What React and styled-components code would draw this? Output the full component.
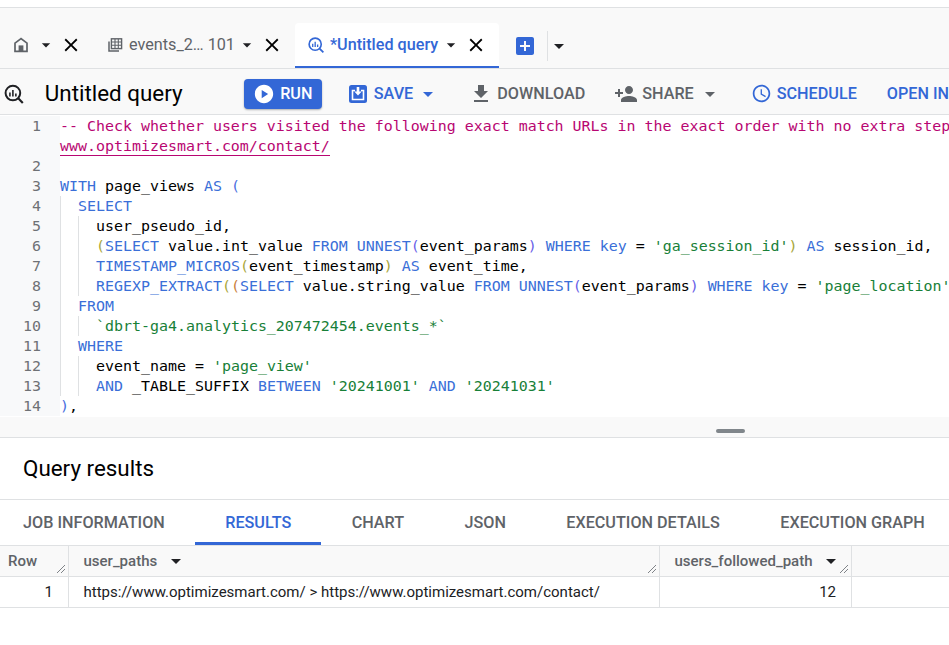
import React from 'react'
import styled, { createGlobalStyle } from 'styled-components'
import {
  MdClose,
  MdArrowDropDown,
  MdPlayCircle,
  MdFileDownload,
  MdPersonAdd,
  MdOutlineSchedule,
  MdAddBox,
} from 'react-icons/md'

const BLUE = '#3367d6'
const GREY = '#5f6368'
const LINE = '#dfe1e3'

const Global = createGlobalStyle`
  html, body { margin: 0; padding: 0; background: #fff; }
  body { font-family: Roboto, "Liberation Sans", sans-serif; overflow: hidden; }
`

const Page = styled.div`
  width: 949px;
  height: 645px;
  overflow: hidden;
  display: flex;
  flex-direction: column;
  background: #fff;
`

const TopStrip = styled.div`
  height: 7px;
  flex: none;
  border-bottom: 1px solid ${LINE};
`

const TabBar = styled.div`
  height: 61px;
  flex: none;
  box-sizing: border-box;
  display: flex;
  align-items: flex-end;
  background: #f9f9f9;
  border-bottom: 1px solid ${LINE};
`

const Tab = styled.div`
  height: 45px;
  box-sizing: border-box;
  padding: 0 12px;
  display: flex;
  align-items: center;
  background: ${(p) => (p.$active ? '#fff' : 'transparent')};
  border-bottom: 2px solid ${(p) => (p.$active ? BLUE : 'transparent')};
  border-radius: 4px 4px 0 0;
  color: ${(p) => (p.$active ? BLUE : GREY)};
`

const TabLabel = styled.span`
  font-size: 16.2px;
  font-weight: ${(p) => (p.$active ? 500 : 400)};
  margin: 0 ${(p) => (p.$active ? 3 : 2)}px 0 5px;
  white-space: nowrap;
`

const TabCaret = styled(MdArrowDropDown)`
  flex: none;
  color: #202124;
  margin-left: ${(p) => (p.$gap ? '6px' : '0')};
`

const TabClose = styled(MdClose)`
  flex: none;
  color: #000;
  margin-left: 4px;
`

const NewTab = styled.div`
  height: 45px;
  margin-left: 14px;
  display: flex;
  align-items: center;
  color: ${BLUE};
`

const NewDivider = styled.div`
  width: 1px;
  height: 30px;
  background: ${LINE};
  margin-left: 10px;
`

const NewCaret = styled(MdArrowDropDown)`
  color: #202124;
  margin-left: -1px;
`

const Toolbar = styled.div`
  height: 46px;
  flex: none;
  box-sizing: border-box;
  padding: 4px 0 0 3px;
  display: flex;
  align-items: center;
  white-space: nowrap;
  background: #f9f9f9;
  border-bottom: 1px solid ${LINE};
`

const Title = styled.div`
  width: 199px;
  flex: none;
  margin: 0 0 2px 20px;
  font-size: 22.4px;
  color: #000;
`

const RunButton = styled.div`
  width: 78px;
  height: 30px;
  flex: none;
  box-sizing: border-box;
  margin-top: 1px;
  padding-bottom: 1px;
  display: flex;
  align-items: center;
  justify-content: center;
  gap: 5px;
  border-radius: 4px;
  background: ${BLUE};
  color: #fff;
  font-size: 16.2px;
  font-weight: 500;
  box-shadow: 0 1px 2px rgba(60, 64, 67, 0.4);
`

const ToolButton = styled.div`
  flex: none;
  display: flex;
  align-items: center;
  gap: ${(p) => p.$gap || 4}px;
  margin-left: ${(p) => p.$left || 29}px;
  color: ${(p) => (p.$muted ? GREY : BLUE)};
  font-size: 16.2px;
  font-weight: 500;
`

const ToolCaret = styled(MdArrowDropDown)`
  margin-left: ${(p) => p.$pull || 0}px;
`

const Editor = styled.div`
  height: 302px;
  flex: none;
  overflow: hidden;
  padding-top: 1px;
  box-sizing: border-box;
  background: #fff;
  font-family: "DejaVu Sans Mono", "Liberation Mono", monospace;
  font-size: 14.95px;
  line-height: 20px;
`

const CodeRow = styled.div`
  display: flex;
  height: 20px;
  white-space: pre;
`

const LineNo = styled.div`
  width: 60px;
  flex: none;
  box-sizing: border-box;
  padding-right: 19px;
  text-align: right;
  color: #6e7175;
  background: #f8f9fa;
`

const Indent = styled.span`
  display: inline-block;
  width: 18px;
  height: 20px;
  box-sizing: border-box;
  vertical-align: top;
  border-left: 1px solid ${LINE};
`

const COLORS = {
  c: '#b80672',
  k: '#3a6fd8',
  s: '#188038',
  t: '#000',
  y: '#a9a63a',
  o: '#c9803c',
  p: '#6a5fe8',
  b: '#4a6fe0',
}

const Tok = styled.span`
  color: ${(p) => COLORS[p.$kind]};
  ${(p) => p.$link && `border-bottom: 1px solid ${COLORS.c};`}
`

const Splitter = styled.div`
  height: 21px;
  flex: none;
  box-sizing: border-box;
  padding-left: 716px;
  padding-top: 12px;
  background: #f9f9f9;
  border-bottom: 1px solid ${LINE};
`

const Grip = styled.div`
  width: 29px;
  height: 4px;
  border-radius: 2px;
  background: #80868b;
`

const ResultsTitle = styled.div`
  height: 62px;
  flex: none;
  box-sizing: border-box;
  padding: 0 23px 2px;
  display: flex;
  align-items: center;
  font-size: 22.4px;
  color: #000;
  border-bottom: 1px solid ${LINE};
`

const ResultTabs = styled.div`
  height: 46px;
  flex: none;
  box-sizing: border-box;
  display: flex;
  margin-left: -7.2px;
  margin-right: -7px;
  padding-right: 7px;
  white-space: nowrap;
  border-bottom: 1px solid ${LINE};
`

const ResultTab = styled.div`
  height: 45px;
  box-sizing: border-box;
  padding: 3px 30.2px 0;
  display: flex;
  align-items: center;
  font-size: 16.2px;
  font-weight: 500;
  color: ${(p) => (p.$active ? BLUE : GREY)};
  border-bottom: 3px solid ${(p) => (p.$active ? BLUE : 'transparent')};
`

const Grid = styled.div`
  display: grid;
  grid-template-columns: 69px 591px 192px 1fr;
  grid-auto-rows: 31px;
`

const HeadCell = styled.div`
  position: relative;
  box-sizing: border-box;
  display: flex;
  align-items: center;
  gap: 14px;
  padding-left: ${(p) => (p.$row ? 8 : 14.5)}px;
  background: #f9f9f9;
  font-size: 15px;
  font-weight: 500;
  color: ${GREY};
  border-bottom: 1px solid ${LINE};
  border-right: ${(p) => (p.$last ? 'none' : `1px solid ${LINE}`)};
`

const HeadCaret = styled.span`
  width: 0;
  height: 0;
  border-left: 5px solid transparent;
  border-right: 5px solid transparent;
  border-top: 5px solid #202124;
`

const ResizeHandle = styled.svg`
  position: absolute;
  right: 2px;
  bottom: 2px;
  width: 10px;
  height: 10px;
`

const Cell = styled.div`
  box-sizing: border-box;
  display: flex;
  align-items: center;
  justify-content: ${(p) => (p.$num ? 'flex-end' : 'flex-start')};
  padding: ${(p) => (p.$num ? '0 15px 0 0' : '0 0 0 14.5px')};
  font-size: 15px;
  color: #202124;
  white-space: nowrap;
  border-bottom: 1px solid ${LINE};
  border-right: ${(p) => (p.$last ? 'none' : `1px solid ${LINE}`)};
`

const HomeIcon = () => (
  <svg width="18" height="18" viewBox="0 0 18 18">
    <path d="M9 2.6 3 7.2V15.4h12V7.2L9 2.6Z" fill="none" stroke={GREY} strokeWidth="1.7" />
    <rect x="6.6" y="9.4" width="4.8" height="6" fill={GREY} />
  </svg>
)

const TableIcon = () => (
  <svg width="18" height="18" viewBox="0 0 18 18" fill="none" stroke={GREY}>
    <rect x="5.4" y="2.8" width="10.2" height="9.8" strokeWidth="1.4" />
    <path d="M5.4 6h10.2M5.4 9.2h10.2M9 3v9.6M12.3 3v9.6" strokeWidth="1.1" />
    <path d="M3 5.5V15h10" strokeWidth="1.5" />
  </svg>
)

const QueryIcon = ({ size, color }) => (
  <svg width={size} height={size} viewBox="0 0 22 22" fill="none" stroke={color}>
    <circle cx="10" cy="10" r="7.4" strokeWidth="2" />
    <path d="M15.4 15.4 20 20" strokeWidth="2.2" />
    <path d="M7 9.5v4M10 7v6.5M13 10.5v3" strokeWidth="1.6" />
  </svg>
)

const SaveIcon = () => (
  <svg width="22" height="22" viewBox="0 0 22 22">
    <rect x="2" y="2" width="18" height="18" rx="2.5" fill={BLUE} />
    <path d="M8 7.5H5.5v9h11v-9H14" fill="none" stroke="#fff" strokeWidth="1.6" />
    <path d="M9.7 4h2.6v4.6h2.4L11 12.6 7.3 8.6h2.4Z" fill="#fff" />
  </svg>
)

const Handle = () => (
  <ResizeHandle viewBox="0 0 10 10">
    <path d="M1 9 9 1M5 9l4-4" stroke="#70757a" strokeWidth="0.9" fill="none" />
  </ResizeHandle>
)

// token lists for the editor, [kind, text]
const LINES = [
  { n: 1, t: [['c', '-- Check whether users visited the following exact match URLs in the exact order with no extra step']] },
  { t: [['c', 'www.optimizesmart.com/contact/', true]] },
  { n: 2, t: [] },
  { n: 3, t: [['k', 'WITH'], ['t', ' page_views '], ['k', 'AS'], ['t', ' '], ['b', '(']] },
  { n: 4, i: 1, t: [['k', 'SELECT']] },
  { n: 5, i: 2, t: [['t', 'user_pseudo_id,']] },
  {
    n: 6,
    i: 2,
    t: [
      ['y', '('], ['k', 'SELECT'], ['t', ' value.int_value '], ['k', 'FROM'], ['t', ' '], ['k', 'UNNEST'], ['p', '('],
      ['t', 'event_params'], ['p', ')'], ['t', ' '], ['k', 'WHERE'], ['t', ' '], ['k', 'key'], ['t', ' = '], ['s', "'ga_session_id'"],
      ['y', ')'], ['t', ' '], ['k', 'AS'], ['t', ' session_id,'],
    ],
  },
  { n: 7, i: 2, t: [['k', 'TIMESTAMP_MICROS'], ['y', '('], ['t', 'event_timestamp'], ['y', ')'], ['t', ' '], ['k', 'AS'], ['t', ' event_time,']] },
  {
    n: 8,
    i: 2,
    t: [
      ['k', 'REGEXP_EXTRACT'], ['y', '('], ['o', '('], ['k', 'SELECT'], ['t', ' value.string_value '], ['k', 'FROM'], ['t', ' '],
      ['k', 'UNNEST'], ['p', '('], ['t', 'event_params'], ['p', ')'], ['t', ' '], ['k', 'WHERE'], ['t', ' '], ['k', 'key'], ['t', ' = '], ['s', "'page_location'"],
    ],
  },
  { n: 9, i: 1, t: [['k', 'FROM']] },
  { n: 10, i: 2, t: [['s', '`dbrt-ga4.analytics_207472454.events_*`']] },
  { n: 11, i: 1, t: [['k', 'WHERE']] },
  { n: 12, i: 2, t: [['t', 'event_name = '], ['s', "'page_view'"]] },
  {
    n: 13,
    i: 2,
    t: [['k', 'AND'], ['t', ' _TABLE_SUFFIX '], ['k', 'BETWEEN'], ['t', ' '], ['s', "'20241001'"], ['t', ' '], ['k', 'AND'], ['t', ' '], ['s', "'20241031'"]],
  },
  { n: 14, t: [['b', ')'], ['t', ',']] },
]

const RESULT_TABS = ['JOB INFORMATION', 'RESULTS', 'CHART', 'JSON', 'EXECUTION DETAILS', 'EXECUTION GRAPH']

export default function App() {
  return (
    <Page>
      <Global />
      <TopStrip />
      <TabBar>
        <Tab>
          <HomeIcon />
          <TabCaret size={20} $gap />
          <TabClose size={22} />
        </Tab>
        <Tab>
          <TableIcon />
          <TabLabel>events_2… 101</TabLabel>
          <TabCaret size={20} />
          <TabClose size={22} />
        </Tab>
        <Tab $active>
          <QueryIcon size={18} color={BLUE} />
          <TabLabel $active>*Untitled query</TabLabel>
          <TabCaret size={20} />
          <TabClose size={22} />
        </Tab>
        <NewTab>
          <MdAddBox size={24} />
          <NewDivider />
          <NewCaret size={24} />
        </NewTab>
      </TabBar>
      <Toolbar>
        <QueryIcon size={22} color="#202124" />
        <Title>Untitled query</Title>
        <RunButton>
          <MdPlayCircle size={22} />
          RUN
        </RunButton>
        <ToolButton $left={25} $gap={5}>
          <SaveIcon />
          SAVE
          <ToolCaret size={24} $pull={-2} />
        </ToolButton>
        <ToolButton $left={29} $muted>
          <MdFileDownload size={24} />
          DOWNLOAD
        </ToolButton>
        <ToolButton $muted>
          <MdPersonAdd size={24} />
          SHARE
          <ToolCaret size={24} />
        </ToolButton>
        <ToolButton $left={29} $gap={5}>
          <MdOutlineSchedule size={21} />
          SCHEDULE
        </ToolButton>
        <ToolButton $left={30}>OPEN IN</ToolButton>
      </Toolbar>
      <Editor>
        {LINES.map((line, idx) => (
          <CodeRow key={idx}>
            <LineNo>{line.n}</LineNo>
            <div>
              {Array.from({ length: line.i || 0 }).map((_, g) => (
                <Indent key={g} />
              ))}
              {line.t.map(([kind, text, link], k) => (
                <Tok key={k} $kind={kind} $link={link}>
                  {text}
                </Tok>
              ))}
            </div>
          </CodeRow>
        ))}
      </Editor>
      <Splitter>
        <Grip />
      </Splitter>
      <ResultsTitle>Query results</ResultsTitle>
      <ResultTabs>
        {RESULT_TABS.map((name) => (
          <ResultTab key={name} $active={name === 'RESULTS'}>
            {name}
          </ResultTab>
        ))}
      </ResultTabs>
      <Grid>
        <HeadCell $row>
          Row
          <Handle />
        </HeadCell>
        <HeadCell>
          user_paths
          <HeadCaret />
          <Handle />
        </HeadCell>
        <HeadCell>
          users_followed_path
          <HeadCaret />
          <Handle />
        </HeadCell>
        <HeadCell $last />
        <Cell $num>1</Cell>
        <Cell>https://www.optimizesmart.com/ &gt; https://www.optimizesmart.com/contact/</Cell>
        <Cell $num>12</Cell>
        <Cell $last />
      </Grid>
    </Page>
  )
}
